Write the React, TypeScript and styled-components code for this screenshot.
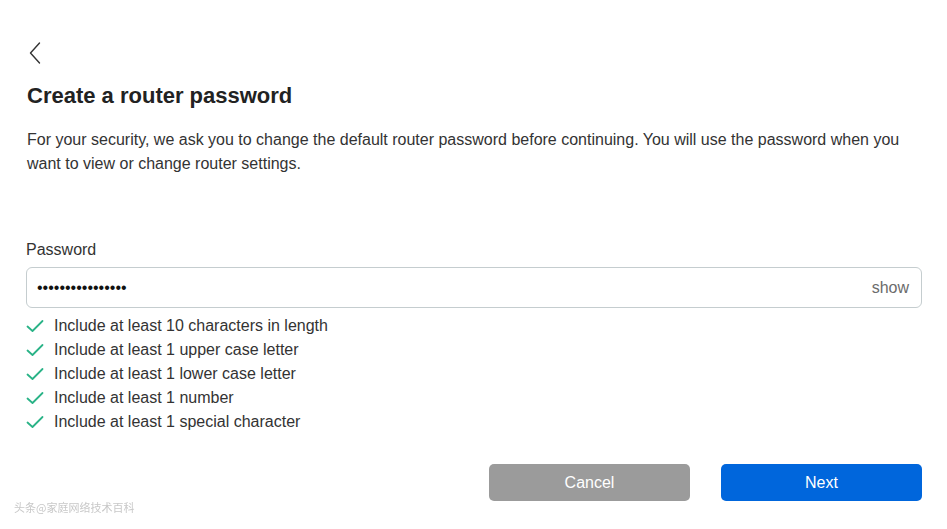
import React from "react";
import styled, { createGlobalStyle } from "styled-components";

const Global = createGlobalStyle`
  html, body { margin: 0; padding: 0; background: #fff; }
  body { font-family: "Liberation Sans", Arial, sans-serif; color: #333; }
`;

const Page = styled.div`
  width: 947px;
  height: 529px;
  box-sizing: border-box;
  padding: 40px 25px 0 26px;
  display: flex;
  flex-direction: column;
  position: relative;
`;

const BackButton = styled.button`
  width: 24px;
  height: 26px;
  padding: 0;
  margin: 0 0 0 3px;
  border: none;
  background: none;
  cursor: pointer;
  display: flex;
  align-items: center;
  justify-content: flex-start;
`;

const Title = styled.h1`
  margin: 16px 0 0 1px;
  font-size: 22px;
  font-weight: bold;
  color: #222;
  line-height: 28px;
`;

const Description = styled.p`
  margin: 18px 0 0 1px;
  font-size: 16px;
  line-height: 24px;
  color: #333;
`;

const Label = styled.label`
  margin-top: 64px;
  font-size: 16px;
  line-height: 20px;
  color: #333;
  display: block;
`;

const InputBox = styled.div`
  margin-top: 7px;
  height: 41px;
  box-sizing: border-box;
  border: 1px solid #c5cdcf;
  border-radius: 6px;
  display: flex;
  align-items: center;
  padding: 0 12px 0 10px;
`;

const Dots = styled.span`
  flex: 1;
  font-size: 16px;
  color: #111;
  font-family: "Liberation Sans", Arial, sans-serif;
`;

const Show = styled.span`
  font-size: 16px;
  color: #6b6b6b;
`;

const Rules = styled.ul`
  list-style: none;
  margin: 6px 0 0 0;
  padding: 0;
`;

const Rule = styled.li`
  display: flex;
  align-items: center;
  height: 24px;
  font-size: 16px;
  color: #333;
  gap: 10px;
`;

const Footer = styled.div`
  margin-top: 30px;
  display: flex;
  justify-content: flex-end;
  gap: 31px;
`;

const Button = styled.button<{ $primary?: boolean }>`
  width: 201px;
  height: 37px;
  border: none;
  border-radius: 5px;
  font-family: "Liberation Sans", Arial, sans-serif;
  font-size: 16px;
  color: #fff;
  background: ${(p) => (p.$primary ? "#0066dc" : "#9b9b9b")};
  cursor: pointer;
`;

const Watermark = styled.div`
  position: absolute;
  left: 14px;
  bottom: 14px;
  font-size: 11px;
  color: #c8c8c8;
  font-family: "Noto Sans CJK SC", sans-serif;
  filter: blur(0.6px);
`;

const Check = () => (
  <svg width="18" height="14" viewBox="0 0 18 14" fill="none">
    <path d="M1.5 7.5 L6.5 12 L16.5 2" stroke="#2ab387" strokeWidth="1.8" strokeLinecap="round" strokeLinejoin="round" />
  </svg>
);

const rules = [
  "Include at least 10 characters in length",
  "Include at least 1 upper case letter",
  "Include at least 1 lower case letter",
  "Include at least 1 number",
  "Include at least 1 special character",
];

export default function App() {
  return (
    <>
      <Global />
      <Page>
        <BackButton aria-label="Back">
          <svg width="12" height="22" viewBox="0 0 12 22" fill="none">
            <path d="M10.5 1 L1.5 11 L10.5 21" stroke="#333" strokeWidth="1.4" strokeLinecap="round" strokeLinejoin="round" />
          </svg>
        </BackButton>
        <Title>Create a router password</Title>
        <Description>
          For your security, we ask you to change the default router password before continuing. You will use the password when you want to view or change router settings.
        </Description>
        <Label>Password</Label>
        <InputBox>
          <Dots>••••••••••••••••</Dots>
          <Show>show</Show>
        </InputBox>
        <Rules>
          {rules.map((r) => (
            <Rule key={r}>
              <Check />
              {r}
            </Rule>
          ))}
        </Rules>
        <Footer>
          <Button>Cancel</Button>
          <Button $primary>Next</Button>
        </Footer>
        <Watermark>头条@家庭网络技术百科</Watermark>
      </Page>
    </>
  );
}
